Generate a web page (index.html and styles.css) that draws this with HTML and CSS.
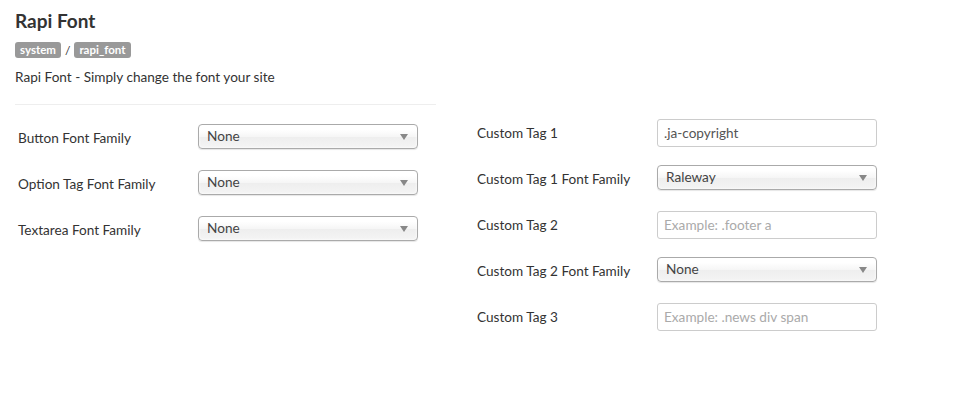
FILE: index.html
```html
<!DOCTYPE html>
<html>
<head>
<meta charset="utf-8">
<link rel="stylesheet" href="styles.css">
</head>
<body>
<div class="page">
  <div class="col col-left">
    <h1 class="title">Rapi Font</h1>
    <div class="crumbs"><span class="badge">system</span><span class="sep">/</span><span class="badge">rapi_font</span></div>
    <p class="desc">Rapi Font - Simply change the font your site</p>
    <hr class="rule">
    <div class="form form-left">
      <div class="row"><label class="lbl">Button Font Family</label><div class="select"><span>None</span><i class="arrow"></i></div></div>
      <div class="row"><label class="lbl">Option Tag Font Family</label><div class="select"><span>None</span><i class="arrow"></i></div></div>
      <div class="row"><label class="lbl">Textarea Font Family</label><div class="select"><span>None</span><i class="arrow"></i></div></div>
    </div>
  </div>
  <div class="col col-right">
    <div class="form form-right">
      <div class="row"><label class="lbl">Custom Tag 1</label><input class="text" type="text" value=".ja-copyright"></div>
      <div class="row"><label class="lbl">Custom Tag 1 Font Family</label><div class="select"><span>Raleway</span><i class="arrow"></i></div></div>
      <div class="row"><label class="lbl">Custom Tag 2</label><input class="text" type="text" placeholder="Example: .footer a"></div>
      <div class="row"><label class="lbl">Custom Tag 2 Font Family</label><div class="select"><span>None</span><i class="arrow"></i></div></div>
      <div class="row"><label class="lbl">Custom Tag 3</label><input class="text" type="text" placeholder="Example: .news div span"></div>
    </div>
  </div>
</div>
</body>
</html>
```
FILE: styles.css
```css
html, body {
  margin: 0;
  padding: 0;
  background: #fff;
}
body {
  font-family: Lato, "Open Sans", sans-serif;
  font-size: 13.6px;
  color: #333;
}
.page {
  display: flex;
  padding: 0 15px;
  gap: 38px;
}
.col-left {
  width: 421px;
}
.col-right {
  flex: 1;
  padding-top: 119px;
}
.title {
  margin: 9px 0 0;
  font-size: 19px;
  line-height: 24px;
  font-weight: 700;
  color: #333;
}
.crumbs {
  display: flex;
  align-items: center;
  margin-top: 9px;
  height: 16px;
}
.badge {
  display: inline-block;
  background: #999;
  color: #fff;
  font-size: 11.5px;
  font-weight: 700;
  line-height: 16px;
  padding: 0 5px;
  border-radius: 3px;
}
.sep {
  margin: 0 4px;
  color: #333;
  font-size: 12px;
}
.desc {
  margin: 10px 0 0;
  line-height: 18px;
}
.rule {
  border: 0;
  border-top: 1px solid #eee;
  margin: 18px 0 0;
  height: 0;
}
.form-left {
  margin-top: 19px;
}
.row {
  display: flex;
  align-items: flex-start;
  height: 46px;
}
.lbl {
  width: 183px;
  flex: none;
  padding-left: 3px;
  box-sizing: border-box;
  padding-top: 5px;
  line-height: 18px;
  color: #333;
}
.select {
  position: relative;
  box-sizing: border-box;
  width: 220px;
  height: 25px;
  border: 1px solid #aaa;
  border-radius: 4px;
  background: linear-gradient(#fff 20%, #f6f6f6 50%, #eee 52%, #f4f4f4 100%);
  box-shadow: inset 0 0 3px #fff, 0 1px 1px rgba(0,0,0,.1);
  color: #444;
  line-height: 23px;
  padding-left: 8px;
}
.arrow {
  position: absolute;
  right: 9px;
  top: 9px;
  width: 0;
  height: 0;
  border-left: 4px solid transparent;
  border-right: 4px solid transparent;
  border-top: 6px solid #888;
}
.text {
  box-sizing: border-box;
  width: 220px;
  height: 28px;
  margin: 0;
  border: 1px solid #ccc;
  border-radius: 3px;
  padding: 0 6px;
  font-family: inherit;
  font-size: 13.6px;
  color: #555;
  background: #fff;
  outline: none;
}
.text::placeholder {
  color: #aaa;
}
```
